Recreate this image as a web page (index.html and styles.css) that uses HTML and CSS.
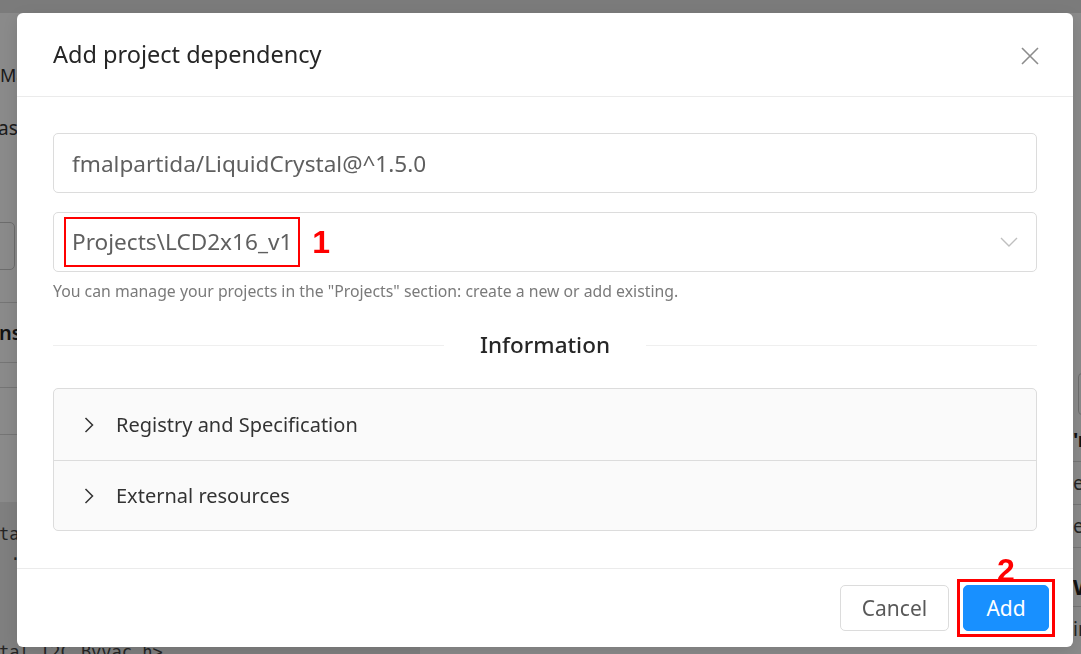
FILE: index.html
```html
<!DOCTYPE html>
<html lang="en">
<head>
<meta charset="utf-8">
<title>Add project dependency</title>
<link rel="stylesheet" href="styles.css">
</head>
<body>
<div class="app">
  <div class="app-top"></div>
  <div class="app-main">
    <div class="left">
      <div class="l-title">Ma</div>
      <div class="l-sub">as</div>
      <div class="l-box"></div>
      <div class="l-rule l-rule-1"></div>
      <div class="l-head">ns</div>
      <div class="l-rule l-rule-2"></div>
      <div class="l-rule l-rule-3"></div>
      <div class="l-rule l-rule-4"></div>
      <div class="l-code">
        <div class="code-line c1">ta</div>
        <div class="code-line c2"> .</div>
        <div class="code-line c3">tal_I2C_Byvac.h&gt;</div>
      </div>
    </div>
    <div class="right">
      <div class="r-box"></div>
      <div class="r-head">'r</div>
      <div class="r-row">e<span class="r-red">l</span></div>
      <div class="r-row">es</div>
      <div class="r-head r-w">W</div>
      <div class="r-row r-last">in</div>
    </div>
  </div>
</div>

<div class="mask"></div>

<div class="modal-wrap">
  <div class="modal" role="dialog">
    <div class="modal-header">
      <h2 class="modal-title">Add project dependency</h2>
      <button class="modal-close" aria-label="Close">
        <svg width="20" height="20" viewBox="0 0 20 20"><path d="M2 2 L18 18 M18 2 L2 18" stroke="#8c8c8c" stroke-width="1.6" fill="none"/></svg>
      </button>
    </div>
    <div class="modal-body">
      <div class="field">fmalpartida/LiquidCrystal@^1.5.0</div>
      <div class="select">
        <span class="select-value"><span class="mark">Projects\LCD2x16_v1</span><span class="num num-1">1</span></span>
        <svg class="select-arrow" width="18" height="10" viewBox="0 0 18 10"><path d="M1 1 L9 9 L17 1" stroke="#bfbfbf" stroke-width="1.4" fill="none"/></svg>
      </div>
      <div class="help">You can manage your projects in the "Projects" section: create a new or add existing.</div>
      <div class="divider"><span class="divider-text">Information</span></div>
      <div class="collapse">
        <div class="collapse-item">
          <svg class="chev" width="10" height="16" viewBox="0 0 10 16"><path d="M1.5 1 L8.5 8 L1.5 15" stroke="#333" stroke-width="1.5" fill="none"/></svg>
          <span>Registry and Specification</span>
        </div>
        <div class="collapse-item">
          <svg class="chev" width="10" height="16" viewBox="0 0 10 16"><path d="M1.5 1 L8.5 8 L1.5 15" stroke="#333" stroke-width="1.5" fill="none"/></svg>
          <span>External resources</span>
        </div>
      </div>
    </div>
    <div class="modal-footer">
      <button class="btn btn-default">Cancel</button>
      <div class="btn-annot">
        <span class="num num-2">2</span>
        <button class="btn btn-primary">Add</button>
        <span class="annot-box"></span>
      </div>
    </div>
  </div>
</div>
</body>
</html>
```

FILE: styles.css
```css
* { box-sizing: border-box; margin: 0; padding: 0; }
html, body { width: 1081px; height: 654px; overflow: hidden; }
body {
  font-family: "Noto Sans", "Open Sans", sans-serif;
  background: #fff;
  color: #262626;
}

/* ---------- background application ---------- */
.app { display: flex; flex-direction: column; height: 654px; overflow: hidden; }
.app-top { height: 13px; background: #e4e4e4; flex: none; }
.app-main { flex: 1; min-height: 0; display: flex; justify-content: space-between; overflow: hidden; }
.left { width: 420px; flex: none; white-space: nowrap; display: flex; flex-direction: column; }
.l-title { margin-top: 49px; height: 26px; line-height: 26px; font-size: 18px; color: #333; }
.l-sub { margin-top: 27px; height: 26px; line-height: 26px; font-size: 19px; color: #333; text-indent: -2px; }
.l-box { margin-top: 81px; margin-left: -20px; width: 35px; height: 48px; border: 1px solid #c8c8c8; border-radius: 5px; }
.l-rule { height: 1px; background: #d8d8d8; flex: none; }
.l-rule-1 { margin-top: 32px; }
.l-head { margin-top: 16px; height: 28px; line-height: 28px; font-size: 20px; font-weight: 600; color: #222; text-indent: -1px; }
.l-rule-2 { margin-top: 15px; }
.l-rule-3 { margin-top: 24px; }
.l-rule-4 { margin-top: 46px; }
.l-code { margin-top: 67px; flex: 1; min-height: 0; background: #ebebeb; font-family: "DejaVu Sans Mono", "Liberation Mono", monospace; font-size: 17px; color: #444; }
.code-line { white-space: pre; height: 20px; line-height: 20px; }
.c1 { padding-top: 22px; height: 42px; text-indent: -1px; }
.c2 { height: 20px; }
.c3 { margin-top: 78px; text-indent: -1px; }

.right { width: 8px; flex: none; white-space: nowrap; }
.r-box { margin-top: 360px; width: 30px; height: 42px; border: 1px solid #c8c8c8; border-radius: 4px; margin-left: 5px; }
.r-head { margin-top: 12px; height: 35px; padding-bottom: 9px; line-height: 26px; font-size: 20px; font-weight: 700; color: #222; border-bottom: 1px solid #d8d8d8; }
.r-row { height: 43px; line-height: 42px; font-size: 19px; color: #444; border-bottom: 1px solid #d8d8d8; }
.r-red { color: #c0392b; }
.r-w { margin-top: 24px; height: 35px; padding-bottom: 6px; line-height: 28px; font-size: 22px; }
.r-last { height: 40px; line-height: 44px; border-bottom: 0; }

/* ---------- mask ---------- */
.mask { position: fixed; inset: 0; background: rgba(0, 0, 0, 0.46); }

/* ---------- modal ---------- */
.modal-wrap { position: fixed; inset: 0; padding: 13px 0 0 17px; }
.modal {
  width: 1056px;
  background: #fff;
  border-radius: 6px;
  box-shadow: 0 4px 18px rgba(0, 0, 0, 0.12);
  display: flex;
  flex-direction: column;
}
.modal-header {
  height: 84px;
  border-bottom: 1px solid #ebebeb;
  padding: 0 33px 0 36px;
  display: flex;
  align-items: center;
  justify-content: space-between;
}
.modal-title { font-size: 23.5px; font-weight: 400; color: #262626; line-height: 32px; margin-top: -1px; }
.modal-close { border: 0; background: none; width: 20px; height: 20px; display: flex; margin-top: 2px; }

.modal-body { padding: 36px 36px 37px; }
.field, .select {
  height: 60px;
  border: 1px solid #dcdcdc;
  border-radius: 5px;
  padding: 0 18px;
  display: flex;
  align-items: center;
  font-size: 22.6px;
  color: #5f5f5f;
}
.select { margin-top: 19px; justify-content: space-between; padding-right: 18px; }
.select-value { display: flex; align-items: center; }
.mark {
  display: inline-block;
  line-height: 34px;
  outline: 2px solid #ff0000;
  outline-offset: 6px;
}
.num { font-family: "Liberation Sans", Arial, sans-serif; font-weight: 700; color: #ff0000; font-size: 32px; line-height: 32px; }
.num-1 { margin-left: 20px; }

.help { margin-top: 9px; font-size: 15.8px; line-height: 20px; color: #7a7a7a; }

.divider { display: flex; align-items: center; margin-top: 28px; height: 32px; }
.divider::before, .divider::after { content: ""; flex: 1; height: 1px; background: #efefef; }
.divider-text { padding: 0 36px; font-size: 22.5px; font-weight: 500; color: #262626; line-height: 32px; }

.collapse { margin-top: 27px; background: #fafafa; border: 1px solid #dcdcdc; border-radius: 5px; }
.collapse-item { height: 71px; display: flex; align-items: center; padding-left: 30px; font-size: 20px; color: #333; }
.collapse-item + .collapse-item { border-top: 1px solid #dcdcdc; height: 70px; }
.chev { margin-right: 22px; }

.modal-footer {
  border-top: 1px solid #ebebeb;
  padding: 16px 24px 16px;
  display: flex;
  justify-content: flex-end;
  gap: 14px;
}
.btn {
  height: 46px;
  border-radius: 5px;
  font-family: inherit;
  font-size: 21px;
  padding: 0 20px;
  cursor: pointer;
}
.btn-default { background: #fff; border: 1px solid #dcdcdc; color: #595959; width: 109px; }
.btn-primary { background: #1890ff; border: 1px solid #1890ff; color: #fff; width: 86px; }
.btn-annot { position: relative; display: flex; }
.annot-box { position: absolute; inset: -6px; border: 3px solid #ff0000; pointer-events: none; }
.num-2 { position: absolute; left: 50%; transform: translateX(-50%); top: -31px; }
```
